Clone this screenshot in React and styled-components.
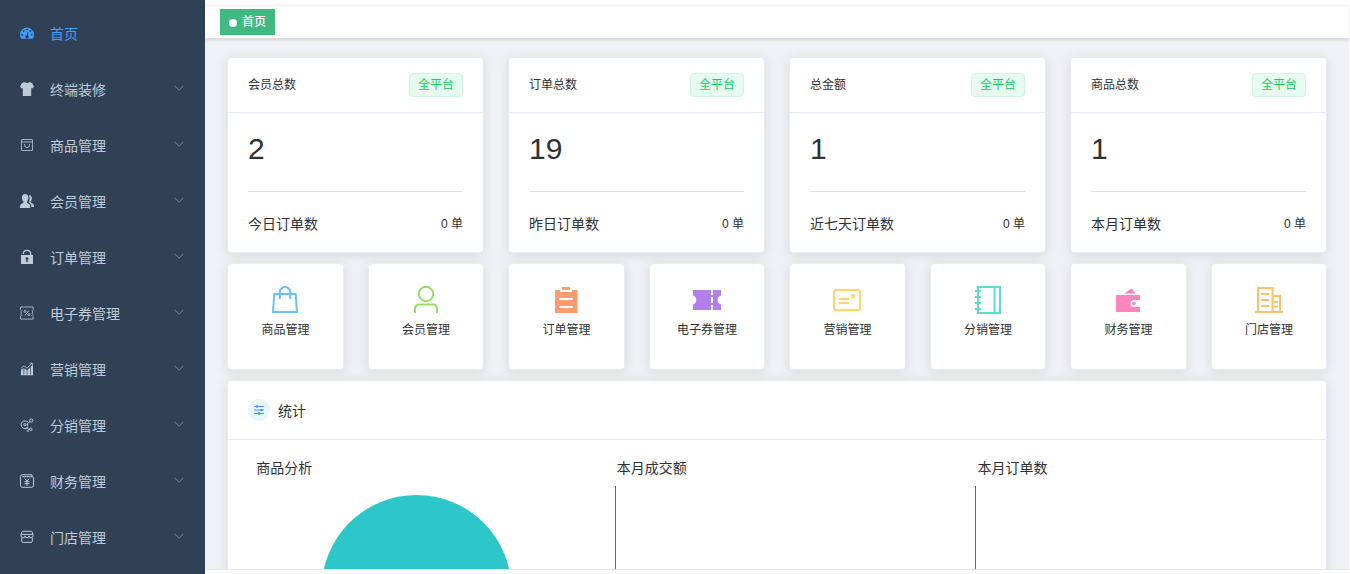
import React from 'react';
import styled, { createGlobalStyle } from 'styled-components';

const GlobalStyle = createGlobalStyle`
  *, *::before, *::after { box-sizing: border-box; }
  body {
    margin: 0;
    overflow: hidden;
    font-family: "Liberation Sans", "Noto Sans CJK SC", sans-serif;
    font-size: 14px;
    color: #303133;
  }
`;

const Layout = styled.div`
  display: flex;
  width: 1350px;
  height: 574px;
  overflow: hidden;
  background: #fff;
`;

const Sidebar = styled.nav`
  flex: none;
  width: 205px;
  padding-top: 6px;
  background: #304156;
  overflow: hidden;
`;

const MenuItem = styled.a`
  display: flex;
  align-items: center;
  height: 56px;
  padding: 0 20px;
  color: ${(p) => (p.$active ? '#409eff' : '#bfcbd9')};
`;

const MenuIcon = styled.svg`
  flex: none;
  width: 14px;
  height: 14px;
  margin: 0 16px 2px 0;
  overflow: visible;
`;

const MenuLabel = styled.span`
  flex: 1;
  line-height: 20px;
`;

const Arrow = styled.svg`
  width: 12px;
  height: 12px;
  margin-bottom: 4px;
  color: #84868d;
`;

const Main = styled.main`
  display: flex;
  flex-direction: column;
  width: 1144px;
  margin-right: 1px;
`;

const Navbar = styled.header`
  flex: none;
  height: 5px;
  background: #fff;
`;

const TagsBar = styled.div`
  flex: none;
  display: flex;
  z-index: 1;
  height: 34px;
  padding: 4px 15px 0;
  background: #fff;
  border-bottom: 1px solid #d8dce5;
  box-shadow: 0 1px 3px rgba(0, 0, 0, 0.12), inset 0 2px 2px -1px rgba(0, 21, 41, 0.06);
`;

const PageTag = styled.a`
  display: flex;
  align-items: center;
  gap: 5px;
  width: 55px;
  height: 26px;
  padding: 1px 8px 0 9px;
  background: #42b983;
  color: #fff;
  font-size: 12px;
  font-weight: 500;
  line-height: 25px;
  white-space: nowrap;

  &::before {
    content: '';
    flex: none;
    width: 8px;
    height: 8px;
    margin-top: 1px;
    border-radius: 50%;
    background: #fff;
  }
`;

const Content = styled.div`
  flex: none;
  height: 530px;
  padding: 18px 21.9px 0 22.2px;
  overflow: hidden;
  background: #f0f1f5;
`;

const Row = styled.div`
  display: grid;
  grid-template-columns: repeat(${(p) => p.$cols}, 1fr);
  column-gap: 24.1px;
  margin-bottom: 10px;
`;

const Card = styled.section`
  background: #fff;
  border: 1px solid #e6ebf5;
  border-radius: 4px;
  box-shadow: 0 2px 12px rgba(0, 0, 0, 0.1);
`;

const SummaryCard = styled(Card)`
  height: 196px;
`;

const SummaryHead = styled.div`
  display: flex;
  justify-content: space-between;
  height: 55px;
  padding: 15px 20px 0 19.8px;
  border-bottom: 1px solid #e6ebf5;
  font-size: 12px;
  line-height: 24px;
`;

const Badge = styled.span`
  height: 24px;
  padding: 0 8px;
  border: 1px solid #d0f5e0;
  border-radius: 4px;
  background: #e7faf0;
  color: #13ce66;
  line-height: 22px;
`;

const SummaryBody = styled.div`
  padding: 0 20px 0 19.8px;
`;

const Figure = styled.div`
  height: 79px;
  padding-top: 17px;
  border-bottom: 1px solid #dcdfe6;
  font-size: 30px;
  line-height: 38px;
`;

const SummaryFoot = styled.div`
  display: flex;
  justify-content: space-between;
  padding-top: 21px;
  line-height: 22px;
`;

const Count = styled.span`
  font-size: 12px;
`;

const ShortcutCard = styled(Card)`
  display: flex;
  flex-direction: column;
  align-items: center;
  height: 107px;
  padding-top: 22px;
  font-size: 12px;
`;

const ShortcutIcon = styled.svg`
  width: 28px;
  height: 28px;
  margin-bottom: 7px;
  color: ${(p) => p.$color};
`;

const ShortcutLabel = styled.span`
  line-height: 18px;
`;

const StatsCard = styled(Card)`
  height: 420px;
`;

const StatsHead = styled.div`
  display: flex;
  align-items: center;
  gap: 8px;
  height: 59px;
  padding: 0 19.8px;
  border-bottom: 1px solid #e6ebf5;
`;

const RoundIcon = styled.span`
  display: grid;
  place-items: center;
  width: 22px;
  height: 22px;
  border-radius: 50%;
  background: #e6f7ff;
  color: #338aff;
`;

const Charts = styled.div`
  display: grid;
  grid-template-columns: repeat(3, 1fr);
  padding: 0 8px;
`;

const ChartPanel = styled.div`
  padding: 18px 0 0 18px;
`;

const ChartTitle = styled.h3`
  margin: 0 0 7px 2px;
  font-size: 14px;
  font-weight: 400;
  line-height: 20px;
`;

const Chart = styled.svg`
  display: block;
  width: 340px;
  height: 210px;
`;

const BottomBar = styled.footer`
  flex: none;
  height: 5px;
  border-top: 1px solid #e6e6e6;
  background: #fdfdfd;
`;

const thin = { fill: 'none', stroke: 'currentColor', strokeWidth: 0.8 };

const menu = [
  {
    label: '首页',
    active: true,
    icon: (
      <>
        <path fill="currentColor" d="M1.4 12.8A7 7 0 1 1 12.6 12.8Z" />
        <g fill="#304156">
          <circle cx="2.3" cy="8.7" r="1" />
          <circle cx="3.7" cy="5" r="1" />
          <circle cx="7" cy="3.4" r="1" />
          <circle cx="10.4" cy="5" r="1" />
          <circle cx="11.7" cy="8.7" r="1" />
          <path d="M7.6 5.7l1 .3-.8 3.3a1.7 1.7 0 1 1-1-.2z" />
        </g>
      </>
    ),
  },
  {
    label: '终端装修',
    icon: <path fill="currentColor" d="M4.2 0Q7 2.2 9.8 0L12.2 1.2 14 4.8 12.2 6.4 11.2 5.9V14H2.8V5.9L1.8 6.4 0 4.8 1.8 1.2Z" />,
  },
  {
    label: '商品管理',
    icon: (
      <g {...thin}>
        <rect x="1.5" y="1.5" width="11" height="11" rx=".5" />
        <path d="M1.5 4h11M4.6 6v1.2a2.4 2.4 0 0 0 4.8 0V6" />
      </g>
    ),
  },
  {
    label: '会员管理',
    icon: (
      <g fill="currentColor">
        <path d="M5.2 0C7.5 0 8.6 1.7 8.4 4.1 8.3 5.8 7.6 7 6.9 7.7c-.1 1 .3 1.3 1.5 1.8C10 10.2 10.2 11.5 10.2 14H0c0-2.5.3-3.8 1.9-4.5C3.2 9 3.6 8.7 3.5 7.7 2.8 7 2.1 5.8 2 4.1 1.8 1.7 2.9 0 5.2 0Z" />
        <path d="M8.800 1.400C10.600 1 12 2.400 11.800 4.700c-.1 1.500-.7 2.400-1.200 3 0 .8.300 1.100 1.300 1.600C13.500 10 14 10.800 14 13h-2.600c-.1-2.300-.6-3.600-2.600-4.500C9.900 6.500 10.100 3.800 8.800 1.400Z" />
      </g>
    ),
  },
  {
    label: '订单管理',
    icon: (
      <>
        <path fill="none" stroke="currentColor" strokeWidth="1.3" d="M3.4 4V3.600a3.600 3.200 0 0 1 7.200 0V5" />
        <path fill="currentColor" fillRule="evenodd" d="M1 5h12v9H1ZM7 7.200a1.500 1.500 0 0 0-.7 2.800V12h1.400v-2A1.500 1.500 0 0 0 7 7.200Z" />
      </>
    ),
  },
  {
    label: '电子券管理',
    icon: (
      <g {...thin}>
        <path d="M.5 1h12.600v2.800l-1 1 1 1.200-1 1.200 1 1.200-1 1.100 1 1.100v2.500H.5V10.300l1.200-1L.7 8.200l1-1.200-1-1.200 1-1L.5 3.700Z" />
        <path d="M9 4.400L5 9.500" />
        <circle cx="5.100" cy="5.400" r="1" />
        <circle cx="8.900" cy="8.600" r="1" />
      </g>
    ),
  },
  {
    label: '营销管理',
    icon: (
      <>
        <path fill="currentColor" d="M1 8l2.500-2v7H1ZM4.300 6.600L6.800 8v5H4.300ZM7.500 8L10 5.500V13H7.500ZM10.700 4.800L13 3v10h-2.300ZM.8 12.400h12.400v.8H.8Z" />
        <path {...thin} d="M1.200 6.200L4 3.800l3 2.400L12 1.200M9.600 1.200h2.800v2.500" />
      </>
    ),
  },
  {
    label: '分销管理',
    icon: (
      <g {...thin} strokeWidth="1">
        <path d="M7.800 4A3.900 3.900 0 1 0 8 9.300" />
        <circle cx="4.900" cy="6.700" r="1.100" />
        <circle cx="11.300" cy="2.500" r="1.600" />
        <circle cx="10.800" cy="11.300" r="1.300" />
        <path d="M7.500 8.500V5.500L10 3.600M6.500 9.500l1.500 1.800h1.500M6.500 13h2.500" />
      </g>
    ),
  },
  {
    label: '财务管理',
    icon: (
      <g {...thin} strokeWidth="1">
        <path d="M2.200.8h9.800v1.700M2.200.8A1.700 1.700 0 0 0 .5 2.500v8.800a2 2 0 0 0 2 2h9a2 2 0 0 0 2-2V4.200a1.500 1.500 0 0 0-1.500-1.500H2.300" />
        <path d="M4.800 4.600L7 7.200l2.300-2.600M7 7.200v4.500M4.500 7.700h5M4.500 9.700h5" />
      </g>
    ),
  },
  {
    label: '门店管理',
    icon: (
      <g {...thin} strokeWidth="1">
        <path d="M3 1.300h8a1.500 1.500 0 0 1 1.300.9l.7 2.300v1.200a2 2 0 0 1-4 .1 2 2 0 0 1-4 0 2 2 0 0 1-4-.1V4.500l.7-2.300A1.500 1.500 0 0 1 3 1.300ZM1.200 4.400h11.600M1.700 7.700v3.500a1.200 1.200 0 0 0 1.200 1.200h8.200a1.200 1.200 0 0 0 1.200-1.200V7.700" />
      </g>
    ),
  },
];

const summaries = [
  { title: '会员总数', value: 2, period: '今日订单数' },
  { title: '订单总数', value: 19, period: '昨日订单数' },
  { title: '总金额', value: 1, period: '近七天订单数' },
  { title: '商品总数', value: 1, period: '本月订单数' },
];

const line = { fill: 'none', stroke: 'currentColor', strokeWidth: 2 };

const shortcuts = [
  {
    label: '商品管理',
    color: '#69c0ff',
    icon: <path {...line} d="M3.200 8H24.600L26 26.100H2ZM8.800 13V6.200a5.200 5.200 0 0 1 10.400 0V13" />,
  },
  {
    label: '会员管理',
    color: '#95de64',
    icon: (
      <g {...line}>
        <circle cx="14" cy="8" r="7.200" />
        <path d="M3 27v-4.500a4 4 0 0 1 4-4h14a4 4 0 0 1 4 4V27" />
      </g>
    ),
  },
  {
    label: '订单管理',
    color: '#ff9c6e',
    icon: <path fill="currentColor" fillRule="evenodd" d="M10 1h8v3h-8ZM3 4h5v2h12V4h5.500v23H3ZM7 12v2h14v-2ZM7 20v2h14v-2Z" />,
  },
  {
    label: '电子券管理',
    color: '#b37feb',
    icon: (
      <path fill="currentColor" d="M0 4h18v5h2V4h8v5.500a4.700 4.700 0 0 0 0 9V24h-8v-5h-2v5H0v-5.500a4.700 4.700 0 0 0 0-9ZM18 11v6h2v-6Z" fillRule="evenodd" />
    ),
  },
  {
    label: '营销管理',
    color: '#ffd666',
    icon: (
      <>
        <path {...line} d="M3 4h22a2 2 0 0 1 2 2v16a2 2 0 0 1-2 2H3a2 2 0 0 1-2-2V6a2 2 0 0 1 2-2ZM6 13h10M6 17h10" />
        <circle cx="20" cy="10" r="2.200" fill="currentColor" />
      </>
    ),
  },
  {
    label: '分销管理',
    color: '#5cdbd3',
    icon: <path {...line} d="M4 1h22v26H4ZM20.500 1v26M1 5h6M1 11h6M1 17h6M1 23h6" />,
  },
  {
    label: '财务管理',
    color: '#ff85c0',
    icon: (
      <>
        <path fill="currentColor" d="M10 7.500L17.500 2.500 21.500 7.500ZM2 9h24v5h-6a3.500 3.500 0 0 0 0 7h6v5H2Z" />
        <circle cx="20" cy="17.500" r="1.800" fill="currentColor" />
      </>
    ),
  },
  {
    label: '门店管理',
    color: '#ffc069',
    icon: <path {...line} d="M0 26H28M3 26V2H17.500V26M17.500 10H25V26M6 8h8M6 14h8M6 20h8M19 16h4M19 20.500h4" />,
  },
];

export default function App() {
  return (
    <Layout>
      <GlobalStyle />
      <Sidebar>
        {menu.map((item) => (
          <MenuItem key={item.label} $active={item.active}>
            <MenuIcon viewBox="0 0 14 14">{item.icon}</MenuIcon>
            <MenuLabel>{item.label}</MenuLabel>
            {!item.active && (
              <Arrow viewBox="0 0 12 12">
                <path d="M1.700 3.900L6 8.200l4.300-4.300" fill="none" stroke="currentColor" />
              </Arrow>
            )}
          </MenuItem>
        ))}
      </Sidebar>
      <Main>
        <Navbar />
        <TagsBar>
          <PageTag>首页</PageTag>
        </TagsBar>
        <Content>
          <Row $cols={4}>
            {summaries.map((s) => (
              <SummaryCard key={s.title}>
                <SummaryHead>
                  <span>{s.title}</span>
                  <Badge>全平台</Badge>
                </SummaryHead>
                <SummaryBody>
                  <Figure>{s.value}</Figure>
                  <SummaryFoot>
                    <span>{s.period}</span>
                    <Count>0 单</Count>
                  </SummaryFoot>
                </SummaryBody>
              </SummaryCard>
            ))}
          </Row>
          <Row $cols={8}>
            {shortcuts.map((s) => (
              <ShortcutCard key={s.label}>
                <ShortcutIcon viewBox="0 0 28 28" $color={s.color}>{s.icon}</ShortcutIcon>
                <ShortcutLabel>{s.label}</ShortcutLabel>
              </ShortcutCard>
            ))}
          </Row>
          <StatsCard>
            <StatsHead>
              <RoundIcon>
                <svg width="12" height="12" viewBox="0 0 12 12">
                  <path d="M1 2.500h10M1 6h10M1 9.500h10" stroke="currentColor" strokeWidth=".9" />
                  <g fill="currentColor">
                    <circle cx="4" cy="2.500" r="1.200" />
                    <circle cx="8.500" cy="6" r="1.200" />
                    <circle cx="6" cy="9.500" r="1.200" />
                  </g>
                </svg>
              </RoundIcon>
              <span>统计</span>
            </StatsHead>
            <Charts>
              <ChartPanel>
                <ChartTitle>商品分析</ChartTitle>
                <Chart viewBox="0 0 340 210">
                  <circle cx="162.500" cy="105" r="95" fill="#2ec7c9" />
                </Chart>
              </ChartPanel>
              <ChartPanel>
                <ChartTitle>本月成交额</ChartTitle>
                <Chart viewBox="0 0 340 210">
                  <path d="M.5 1V200" stroke="#008acd" />
                </Chart>
              </ChartPanel>
              <ChartPanel>
                <ChartTitle>本月订单数</ChartTitle>
                <Chart viewBox="0 0 340 210">
                  <path d="M.5 1V200" stroke="#008acd" />
                </Chart>
              </ChartPanel>
            </Charts>
          </StatsCard>
        </Content>
        <BottomBar />
      </Main>
    </Layout>
  );
}
